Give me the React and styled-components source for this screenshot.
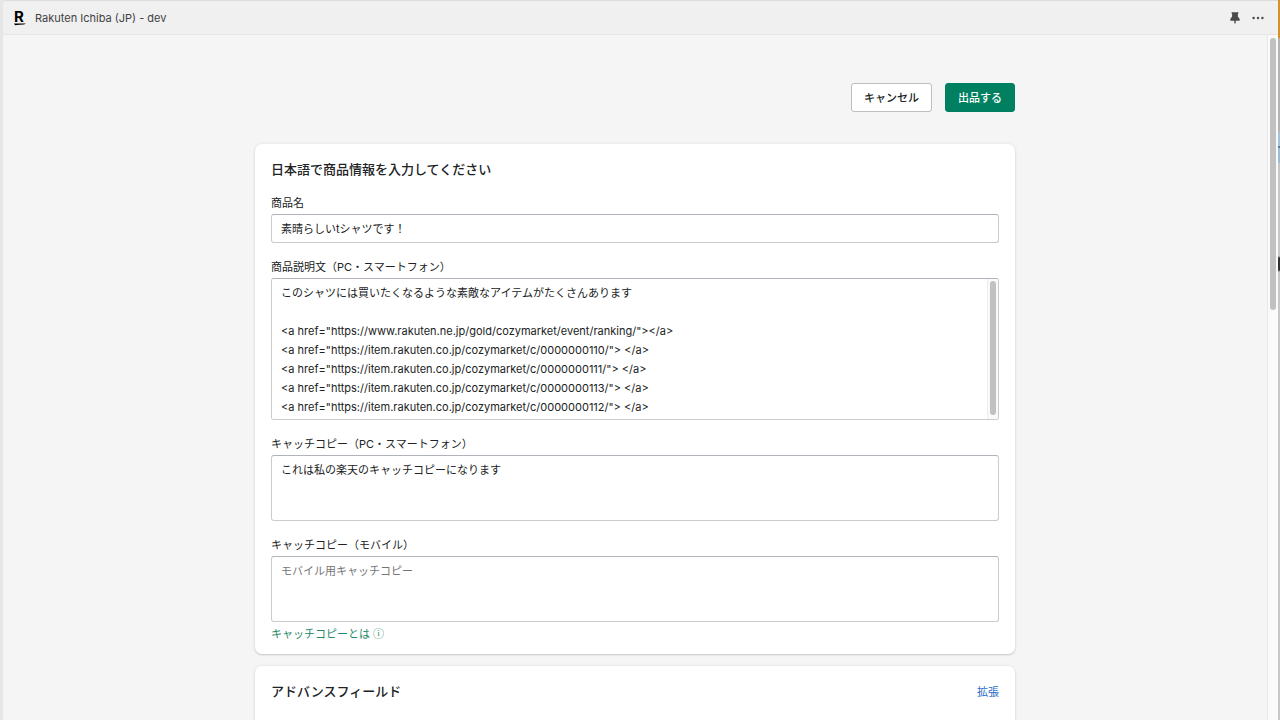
import React, { useState } from 'react'
import styled, { createGlobalStyle } from 'styled-components';

const GlobalStyle = createGlobalStyle`
    * {
        box-sizing:border-box;
    }

    body {
        margin:0;
        background:#e6e6e6;
        color:#202223;
        font-family:Inter, "Noto Sans CJK JP", sans-serif;
        font-size:11px;
        line-height:16px;
    }

    button, input, textarea {
        font:inherit;
        color:inherit;
    }
`;

const Window = styled.div`
    height:100vh;
    display:flex;
`;

const Frame = styled.div`
    flex:1;
    min-width:0;
    margin-left:3px;
    display:flex;
    flex-direction:column;
    background:#f5f5f5;
    border-top:1px solid #dcdcdc;
    border-top-left-radius:4px;
`;

const DesktopEdge = styled.div`
    width:2px;
    background:linear-gradient(
        #d5902f 38px, #b4b4b4 38px, #b4b4b4 132px,
        #a5c3da 132px, #a5c3da 146px, #5b7f9c 146px, #5b7f9c 148px,
        #9cbdd8 148px, #9cbdd8 163px, #c4c8ca 163px, #c4c8ca 256px,
        #333 258px, #333 270px, #c8c8c8 272px
    );
`;

const TopBar = styled.header`
    height:34px;
    flex-shrink:0;
    padding:0 14px 0 9px;
    display:flex;
    align-items:center;
    gap:7px;
    background:#f0f0f0;
    border-bottom:1px solid #e6e6e6;
    border-top-left-radius:4px;
`;

const AppTitle = styled.span`
    flex:1;
    color:#404244;
`;

const TopBarActions = styled.div`
    display:flex;
    align-items:center;
    gap:12px;
`;

const IconButton = styled.button`
    padding:0;
    border:none;
    background:none;
    display:flex;
    color:#4a4a4a;
    cursor:pointer;
`;

const Body = styled.div`
    flex:1;
    min-height:0;
    display:flex;
`;

const Content = styled.main`
    flex:1;
    min-width:0;
    overflow-y:auto;
    scrollbar-width:none;
    padding:48px 16px 16px;
`;

const ScrollTrack = styled.div`
    width:11px;
    flex-shrink:0;
    padding:3px 0 2px;
    background:#fafafa;
    border-left:1px solid #e8e8e8;
`;

const ScrollThumb = styled.div`
    width:6px;
    height:${props => props.$size};
    margin:0 auto;
    background:#c1c1c1;
    border-radius:3px;
`;

const Column = styled.form`
    max-width:760px;
    margin:0 auto;
`;

const Actions = styled.div`
    display:flex;
    justify-content:flex-end;
    gap:13px;
    margin-bottom:32px;
`;

const Button = styled.button`
    height:29px;
    padding:0 12px;
    border:1px solid ${props => props.$primary ? '#008060' : '#babfc3'};
    border-radius:3px;
    background:${props => props.$primary ? '#008060' : '#fff'};
    color:${props => props.$primary ? '#fff' : '#202223'};
    font-weight:500;
    cursor:pointer;
`;

const Card = styled.section`
    margin-bottom:12px;
    padding:16px 16px 11px;
    background:#fff;
    border-radius:7px;
    box-shadow:0 0 4px rgba(23,24,24,0.06), 0 1px 2px rgba(0,0,0,0.16);
`;

const CardHeader = styled.div`
    display:flex;
    justify-content:space-between;
    align-items:flex-end;
    margin-bottom:17px;
`;

const CardTitle = styled.h2`
    margin:0;
    font-size:13px;
    line-height:18px;
    font-weight:500;
`;

const Fields = styled.div`
    display:flex;
    flex-direction:column;
    gap:16px;
`;

const Field = styled.div`
    display:flex;
    flex-direction:column;
    gap:3px;
`;

const Control = styled.div`
    position:relative;
    display:flex;
`;

const TextInput = styled.input`
    width:100%;
    height:29px;
    padding:0 9px 1px;
    border:1px solid #c9cccf;
    border-top-color:#aeb4b9;
    border-radius:3px;
    background:#fff;
`;

const TextArea = styled.textarea`
    width:100%;
    height:${props => props.$tall ? '142px' : '66px'};
    padding:5px 9px 3px;
    border:1px solid #c9cccf;
    border-top-color:#aeb4b9;
    border-radius:3px;
    background:#fff;
    line-height:19px;
    resize:none;
    scrollbar-width:none;

    &::placeholder {
        color:#757575;
        opacity:1;
    }
`;

const InnerTrack = styled.div`
    position:absolute;
    top:1px;
    right:1px;
    bottom:1px;
    width:11px;
    padding:2px 0 4px;
    background:#fafafa;
    border-left:1px solid #eee;
    border-radius:0 3px 3px 0;
`;

const HelpLink = styled.a`
    align-self:flex-start;
    line-height:18px;
    color:#1f8a66;
    text-decoration:none;
`;

const ExpandButton = styled.button`
    padding:0;
    border:none;
    background:none;
    color:#2c6ecb;
    cursor:pointer;
`;

const Logo = () => (
    <svg width="16" height="20" viewBox="0 0 16 20" aria-hidden="true">
        <text x="2" y="14" fontFamily="Inter, sans-serif" fontSize="15" fontWeight="700" fill="#000">R</text>
        <path d="M2 15.6 H14 L12 16.5 Q7 16.8 3 17.3 Z" fill="#000" />
    </svg>
)

const PinIcon = () => (
    <svg width="10" height="12" viewBox="0 0 10 12" fill="currentColor" aria-hidden="true">
        <path d="M2 0.3 H8 Q8.6 0.3 8.5 1 Q8.4 1.6 7.9 2 V4.8 Q9.7 6 9.8 8.1 Q9.8 8.7 9.2 8.7 H5.7 V11 L5 11.8 L4.3 11 V8.7 H0.8 Q0.2 8.7 0.2 8.1 Q0.3 6 2.1 4.8 V2 Q1.6 1.6 1.5 1 Q1.4 0.3 2 0.3 Z" />
    </svg>
)

const DotsIcon = () => (
    <svg width="12" height="4" viewBox="0 0 12 4" fill="currentColor" aria-hidden="true">
        <circle cx="1.6" cy="2" r="1.2" />
        <circle cx="6" cy="2" r="1.2" />
        <circle cx="10.4" cy="2" r="1.2" />
    </svg>
)

const defaultDescription = `このシャツには買いたくなるような素敵なアイテムがたくさんあります

<a href="https://www.rakuten.ne.jp/gold/cozymarket/event/ranking/"></a>
<a href="https://item.rakuten.co.jp/cozymarket/c/0000000110/"> </a>
<a href="https://item.rakuten.co.jp/cozymarket/c/0000000111/"> </a>
<a href="https://item.rakuten.co.jp/cozymarket/c/0000000113/"> </a>
<a href="https://item.rakuten.co.jp/cozymarket/c/0000000112/"> </a>`

const App = () => {
    const [name, setName] = useState('素晴らしいtシャツです！')
    const [description, setDescription] = useState(defaultDescription)
    const [copy, setCopy] = useState('これは私の楽天のキャッチコピーになります')
    const [mobileCopy, setMobileCopy] = useState('')

    return (
        <>
            <GlobalStyle/>
            <Window>
                <Frame>
                    <TopBar>
                        <Logo/>
                        <AppTitle>Rakuten Ichiba (JP) - dev</AppTitle>
                        <TopBarActions>
                            <IconButton type="button" aria-label="Pin"><PinIcon/></IconButton>
                            <IconButton type="button" aria-label="More"><DotsIcon/></IconButton>
                        </TopBarActions>
                    </TopBar>
                    <Body>
                        <Content>
                            <Column onSubmit={e => e.preventDefault()}>
                                <Actions>
                                    <Button type="button">キャンセル</Button>
                                    <Button type="submit" $primary>出品する</Button>
                                </Actions>
                                <Card>
                                    <CardHeader>
                                        <CardTitle>日本語で商品情報を入力してください</CardTitle>
                                    </CardHeader>
                                    <Fields>
                                        <Field>
                                            <label htmlFor="name">商品名</label>
                                            <TextInput id="name" value={name} onChange={e => setName(e.target.value)}/>
                                        </Field>
                                        <Field>
                                            <label htmlFor="description">商品説明文（PC・スマートフォン）</label>
                                            <Control>
                                                <TextArea id="description" $tall value={description} onChange={e => setDescription(e.target.value)}/>
                                                <InnerTrack><ScrollThumb $size="100%"/></InnerTrack>
                                            </Control>
                                        </Field>
                                        <Field>
                                            <label htmlFor="copy">キャッチコピー（PC・スマートフォン）</label>
                                            <TextArea id="copy" value={copy} onChange={e => setCopy(e.target.value)}/>
                                        </Field>
                                        <Field>
                                            <label htmlFor="mobile-copy">キャッチコピー（モバイル）</label>
                                            <TextArea id="mobile-copy" placeholder="モバイル用キャッチコピー" value={mobileCopy} onChange={e => setMobileCopy(e.target.value)}/>
                                            <HelpLink href="#about-copy">キャッチコピーとは ⓘ</HelpLink>
                                        </Field>
                                    </Fields>
                                </Card>
                                <Card>
                                    <CardHeader>
                                        <CardTitle>アドバンスフィールド</CardTitle>
                                        <ExpandButton type="button">拡張</ExpandButton>
                                    </CardHeader>
                                </Card>
                            </Column>
                        </Content>
                        <ScrollTrack><ScrollThumb $size="40%"/></ScrollTrack>
                    </Body>
                </Frame>
                <DesktopEdge/>
            </Window>
        </>
    )
};

export default App
